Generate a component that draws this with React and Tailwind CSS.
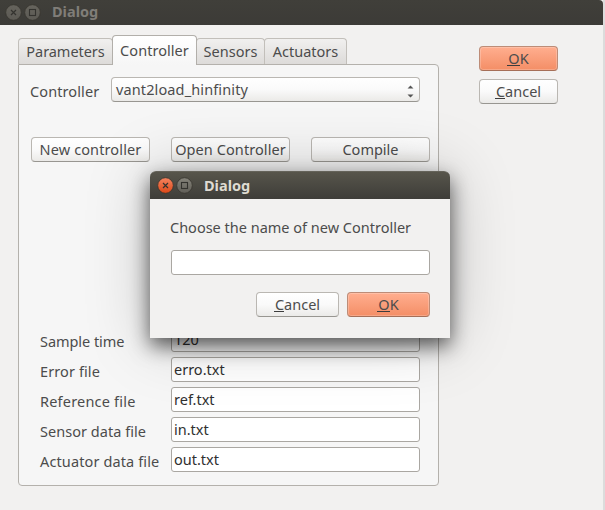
import React from 'react';

const raised =
  'flex h-[25px] items-center justify-center rounded-[4px] border border-[#bab7b2] border-b-[#989691] bg-linear-to-b from-white via-[#fafafa] to-[#ebeae8]';
const accent =
  'flex h-[25px] items-center justify-center rounded-[4px] border border-[#bd8c77] border-b-[#a66f58] bg-linear-to-b from-[#ffae8f] to-[#f48e66] shadow-[inset_0_0_0_1px_#ffffff38]';

function Button({ primary, className, children }) {
  return (
    <button className={`${primary ? accent : raised} ${className}`}>
      <span className="-mt-[2px] block whitespace-nowrap">{children}</span>
    </button>
  );
}

function Mnemonic({ first, rest }) {
  return (
    <span className="mr-px">
      <span className="inline-block h-[18px] border-b border-[#3c3c3c] pl-px leading-[20px]">{first}</span>
      {rest}
    </span>
  );
}

function WindowIcons({ active }) {
  const id = active ? 'front' : 'back';
  const mark = active ? '#33322e' : '#34332f';
  return (
    <svg width="36" height="18" viewBox="0 0 36 18" fill="none">
      <defs>
        <linearGradient id={`${id}-close`} x1="0" y1="0" x2="0" y2="1">
          <stop offset="0" stopColor={active ? '#f58460' : '#66645d'} />
          <stop offset="1" stopColor={active ? '#dd4817' : '#5c5a54'} />
        </linearGradient>
        <linearGradient id={`${id}-max`} x1="0" y1="0" x2="0" y2="1">
          <stop offset="0" stopColor={active ? '#85837a' : '#66645d'} />
          <stop offset="1" stopColor={active ? '#605e57' : '#5c5a54'} />
        </linearGradient>
      </defs>
      <circle cx="8.5" cy="8.5" r="7.8" fill={`url(#${id}-close)`} stroke="#37352f" strokeWidth="0.8" />
      <circle cx="27.5" cy="8.5" r="7.8" fill={`url(#${id}-max)`} stroke="#37352f" strokeWidth="0.8" />
      <path d="M6 6l5 5M11 6l-5 5" stroke={mark} strokeWidth="1.2" />
      <rect x="24.5" y="5.5" width="6" height="6" stroke={mark} strokeWidth="1.1" />
    </svg>
  );
}

function Tab({ active, className, children }) {
  return (
    <div
      className={`flex justify-center whitespace-nowrap rounded-t-[4px] border border-b-0 ${
        active
          ? 'z-[1] -mx-px -mb-px h-[30px] border-[#b2afaa] bg-linear-to-b from-white to-[#f6f6f6] pt-[4px]'
          : 'h-[26px] border-[#c2bfba] bg-linear-to-b from-[#f1f0ef] to-[#dddbd9] pt-[2px]'
      } ${className}`}
    >
      {children}
    </div>
  );
}

function Field({ label, track, value }) {
  return (
    <div className="flex h-[25px]">
      <span className={`w-[131px] pt-[4px] ${track}`}>{label}</span>
      <div className="w-[249px] rounded-[3px] border border-[#aaa7a2] bg-white pl-[2px] pt-px text-[#303030]">
        {value}
      </div>
    </div>
  );
}

export default function App() {
  return (
    <div className="relative h-[510px] w-[605px] overflow-hidden bg-[#dcdcdc] font-['Noto_Sans','Open_Sans',sans-serif] text-[14.5px] leading-[20px] text-[#4c4c4c]">
      <div className="h-[510px] w-[603px] bg-[#f2f1f0]">
        <header className="flex h-[25px] items-center rounded-tr-[4px] bg-linear-to-b from-[#403f3a] to-[#3c3b37] pl-[5px]">
          <WindowIcons />
          <span className="-mt-[4px] pl-[11px] text-[14.5px] font-bold text-[#807d78]">Dialog</span>
        </header>
        <main className="flex pl-[18px] pt-[10px]">
          <section className="w-[421px]">
            <div className="flex h-[29px] items-end">
              <Tab className="w-[95px] tracking-[-0.05px]">Parameters</Tab>
              <Tab active className="w-[85px] tracking-[0.05px]">Controller</Tab>
              <Tab className="w-[69px]">Sensors</Tab>
              <Tab className="-ml-px w-[83px]">Actuators</Tab>
            </div>
            <div className="flex h-[422px] flex-col rounded-[4px] rounded-tl-none border border-[#b4b1ac] bg-[#f6f6f6] pt-[12px]">
              <div className="flex h-[25px] pl-[11px]">
                <span className="w-[81px] pt-[4px] tracking-[0.1px]">Controller</span>
                <div className="flex w-[309px] items-center justify-between rounded-[4px] border border-[#bab7b2] border-b-[#989691] bg-linear-to-b from-white via-[#fafafa] to-[#ebeae8] pl-[4px] pr-[5px]">
                  <span className="-mt-[2px] tracking-[0.12px]">vant2load_hinfinity</span>
                  <svg width="7" height="13" viewBox="0 0 7 13" className="mt-[3px]" fill="#555">
                    <path d="M0.5 3.5L3.5 0.5L6.5 3.5ZM0.5 9.5L3.5 12.5L6.5 9.5Z" />
                  </svg>
                </div>
              </div>
              <div className="mt-[35px] flex gap-[21px] pl-[12px]">
                <Button className="w-[119px] tracking-[0.12px]">New controller</Button>
                <Button className="w-[119px] tracking-[0.08px]">Open Controller</Button>
                <Button className="w-[119px]">Compile</Button>
              </div>
              <div className="mt-[165px] flex flex-col gap-[5px] pl-[21px]">
                <Field label="Sample time" track="-tracking-[0.05px]" value="120" />
                <Field label="Error file" track="tracking-[0.1px]" value="erro.txt" />
                <Field label="Reference file" track="tracking-[0.2px]" value="ref.txt" />
                <Field label="Sensor data file" track="tracking-[0.03px]" value="in.txt" />
                <Field label="Actuator data file" track="tracking-[0.12px]" value="out.txt" />
              </div>
            </div>
          </section>
          <aside className="flex flex-col gap-[8px] pl-[40px] pt-[11px]">
            <Button primary className="w-[79px]"><Mnemonic first="O" rest="K" /></Button>
            <Button className="w-[79px]"><Mnemonic first="C" rest="ancel" /></Button>
          </aside>
        </main>
      </div>

      <div
        role="dialog"
        className="absolute left-[150px] top-[171px] z-10 h-[167px] w-[300px] rounded-t-[6px] bg-[#f2f1f0] shadow-[0_8px_20px_#000000a0,0_2px_65px_#00000038]"
      >
        <header className="flex h-[28px] items-center rounded-t-[6px] border-t border-[#65635a] bg-linear-to-b from-[#57554b] to-[#3e3d39] pl-[7px]">
          <WindowIcons active />
          <span className="-mt-[2px] pl-[11px] text-[14.5px] font-bold text-[#dfdbd2]">Dialog</span>
        </header>
        <div className="flex flex-col px-[20px] pt-[18px]">
          <span className="whitespace-nowrap">Choose the name of new Controller</span>
          <div className="ml-px mt-[13px] h-[25px] w-[259px] rounded-[3px] border border-[#aaa7a2] bg-white" />
          <div className="mt-[17px] flex justify-end gap-[8px]">
            <Button className="w-[83px]"><Mnemonic first="C" rest="ancel" /></Button>
            <Button primary className="w-[83px]"><Mnemonic first="O" rest="K" /></Button>
          </div>
        </div>
      </div>
    </div>
  );
}
